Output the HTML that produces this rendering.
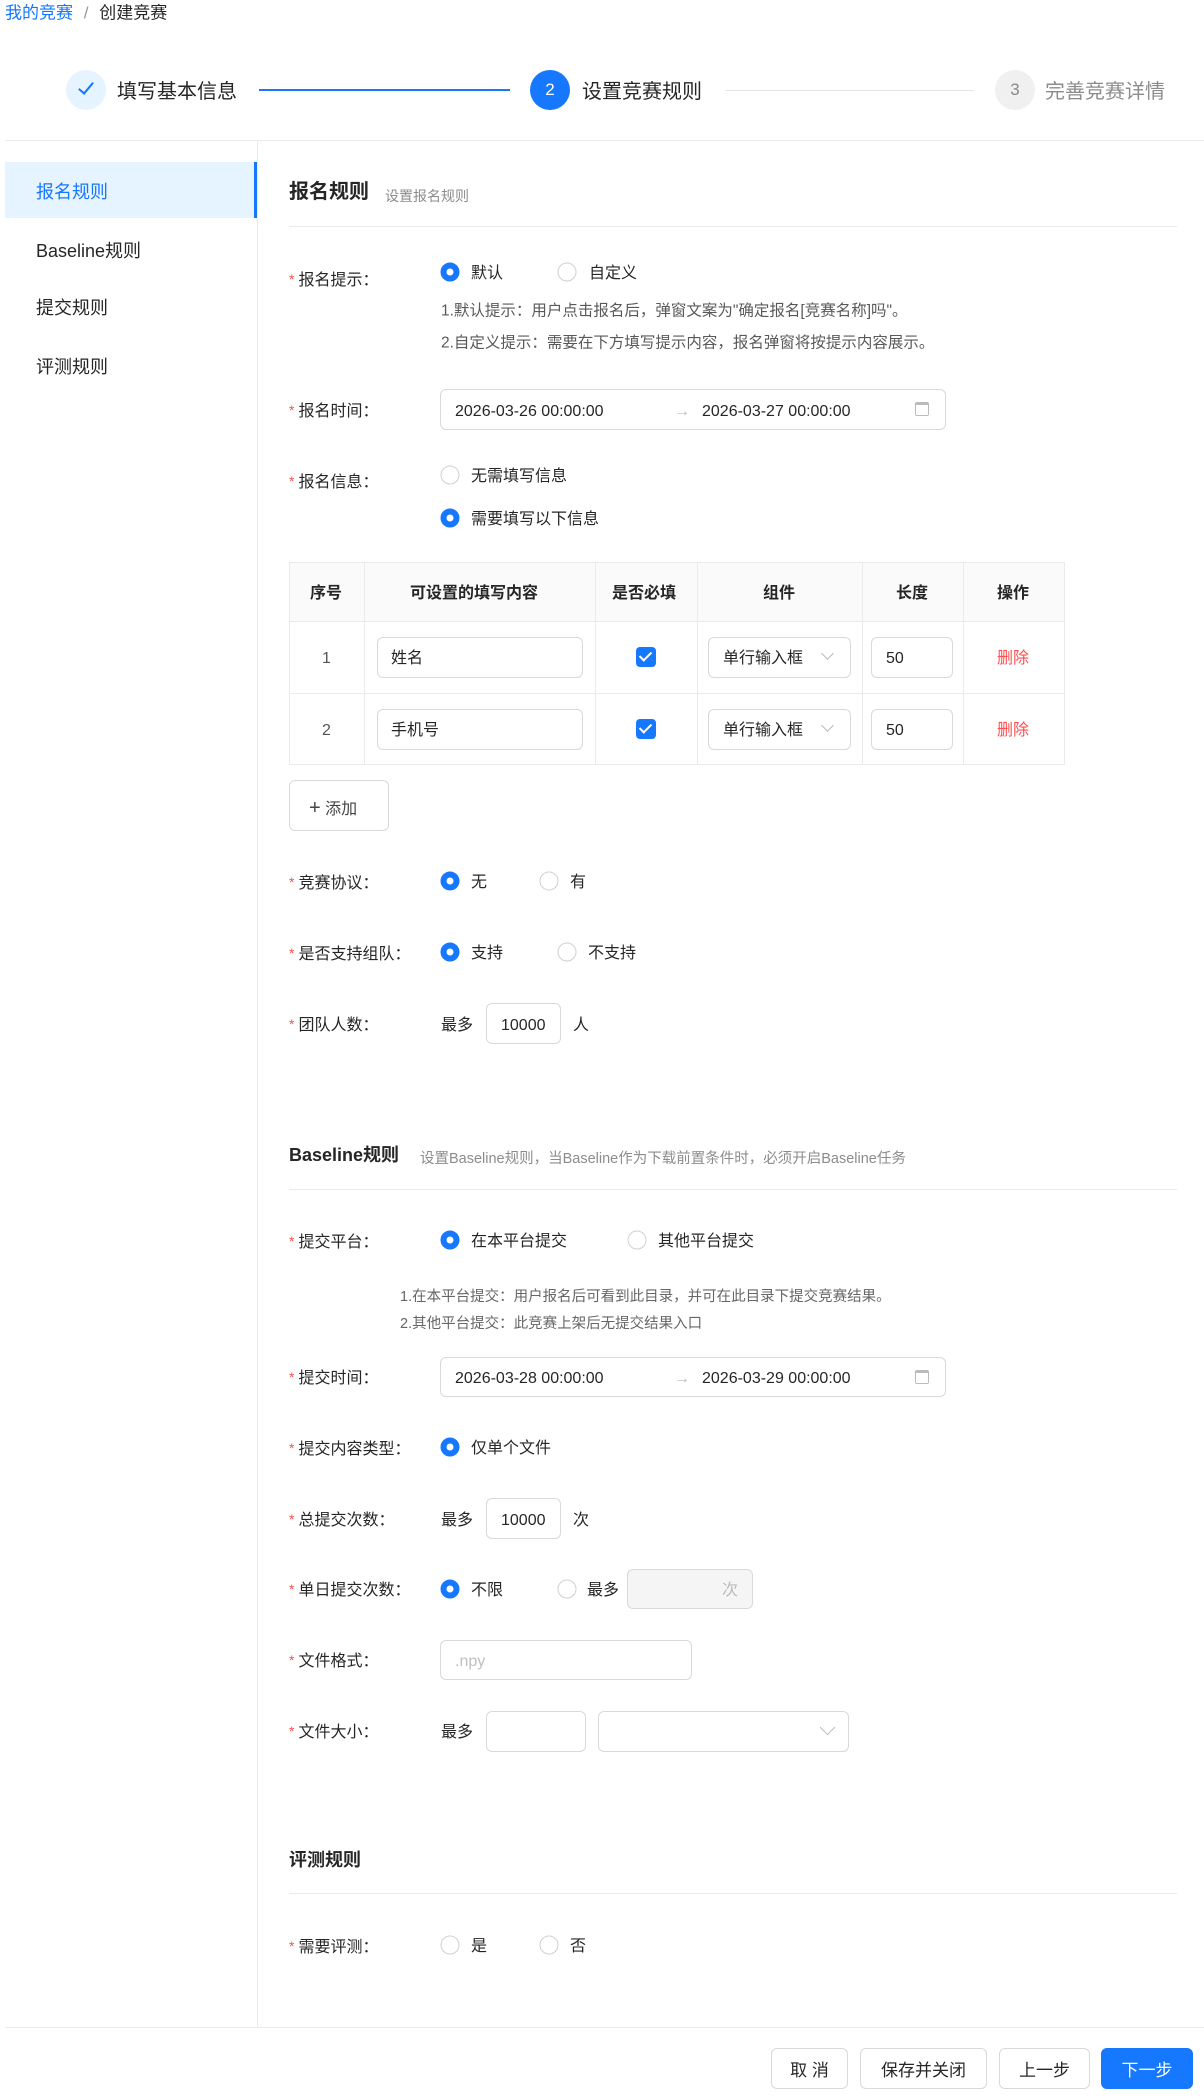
<!DOCTYPE html>
<html><head><meta charset="utf-8"><style>
*{box-sizing:border-box;margin:0;padding:0}
body{width:1204px;height:2099px;position:relative;background:#fff;font-family:"Liberation Sans","Noto Sans CJK SC",sans-serif;color:#262626;font-size:16px;overflow:hidden}
.a{position:absolute;white-space:nowrap}
.c{position:absolute;white-space:nowrap;transform:translateY(calc(-50% + 2px));line-height:1}
.lab:before{content:"*";color:#ff4d4f;margin-right:4px;font-size:14px;position:relative;top:-1px}
.lab{left:289px}
.r{position:absolute;width:19px;height:19px;border-radius:50%;border:1px solid #d0d0d0;background:#fff;transform:translate(-50%,-50%)}
.r.on{border:6px solid #1677ff}
.box{position:absolute;border:1px solid #d9d9d9;border-radius:6px;background:#fff}
.hr{position:absolute;height:1px;background:#ebebeb}
.note{color:#595959;font-size:15.5px}
.btn{position:absolute;top:2048px;height:41px;border:1px solid #d9d9d9;border-radius:6px;display:flex;align-items:center;justify-content:center;font-size:17px;background:#fff}
.cb{position:absolute;width:20px;height:20px;border-radius:4px;background:#1677ff;transform:translate(-50%,-50%)}
.cb:after{content:"";position:absolute;left:6px;top:2px;width:5px;height:10px;border:solid #fff;border-width:0 2px 2px 0;transform:rotate(45deg)}
.chev{position:absolute;width:9px;height:9px;border:solid #bbb;border-width:0 1.5px 1.5px 0;transform:rotate(45deg)}
.th{font-weight:600}
</style></head><body>

<div class="c" style="left:5px;top:11px;font-size:17px"><span style="color:#1677ff">我的竞赛</span> <span style="color:#999;margin:0 6px">/</span> 创建竞赛</div>

<div class="a" style="left:66px;top:70px;width:40px;height:40px;border-radius:50%;background:#e6f4ff"></div>
<div class="a" style="left:82px;top:79px;width:8px;height:15px;border:solid #1677ff;border-width:0 2px 2px 0;transform:rotate(40deg)"></div>
<div class="c" style="left:117px;top:90px;font-size:20px">填写基本信息</div>
<div class="a" style="left:259px;top:89px;width:251px;height:2px;background:#1677ff"></div>
<div class="a" style="left:530px;top:70px;width:40px;height:40px;border-radius:50%;background:#1677ff;color:#fff;text-align:center;line-height:40px;font-size:17px">2</div>
<div class="c" style="left:582px;top:90px;font-size:20px">设置竞赛规则</div>
<div class="a" style="left:725px;top:90px;width:249px;height:1px;background:#e6e6e6"></div>
<div class="a" style="left:995px;top:70px;width:40px;height:40px;border-radius:50%;background:#f0f0f0;color:#888;text-align:center;line-height:40px;font-size:17px">3</div>
<div class="c" style="left:1045px;top:90px;font-size:20px;color:#8c8c8c">完善竞赛详情</div>

<div class="hr" style="left:5px;top:140px;width:1199px"></div>
<div class="a" style="left:257px;top:140px;width:1px;height:1887px;background:#ebebeb"></div>

<div class="a" style="left:5px;top:162px;width:252px;height:56px;background:#e6f4ff;border-right:3px solid #1677ff"></div>
<div class="c" style="left:36px;top:190px;font-size:18px;color:#1677ff">报名规则</div>
<div class="c" style="left:36px;top:249px;font-size:18px">Baseline规则</div>
<div class="c" style="left:36px;top:306px;font-size:18px">提交规则</div>
<div class="c" style="left:36px;top:365px;font-size:18px">评测规则</div>

<div class="c" style="left:289px;top:190px;font-size:20px;font-weight:bold">报名规则</div>
<div class="c" style="left:385px;top:194px;font-size:14px;color:#8c8c8c">设置报名规则</div>
<div class="hr" style="left:289px;top:226px;width:888px"></div>

<div class="c lab" style="top:279px">报名提示：</div>
<div class="r on" style="left:450px;top:272px"></div><div class="c" style="left:471px;top:272px">默认</div>
<div class="r" style="left:567px;top:272px"></div><div class="c" style="left:589px;top:272px">自定义</div>
<div class="c note" style="left:441px;top:309px">1.默认提示：用户点击报名后，弹窗文案为"确定报名[竞赛名称]吗"。</div>
<div class="c note" style="left:441px;top:341px">2.自定义提示：需要在下方填写提示内容，报名弹窗将按提示内容展示。</div>

<div class="c lab" style="top:410px">报名时间：</div>
<div class="box" style="left:440px;top:389px;width:506px;height:41px"></div>
<div class="c" style="left:455px;top:410px">2026-03-26 00:00:00</div>
<div class="c" style="left:674px;top:410px;color:#bbb">→</div>
<div class="c" style="left:702px;top:410px">2026-03-27 00:00:00</div>
<div class="a" style="left:915px;top:402px;width:14px;height:14px;border:1.5px solid #bbb;border-radius:2px;border-top-width:3px"></div>

<div class="c lab" style="top:481px">报名信息：</div>
<div class="r" style="left:450px;top:475px"></div><div class="c" style="left:471px;top:475px">无需填写信息</div>
<div class="r on" style="left:450px;top:518px"></div><div class="c" style="left:471px;top:518px">需要填写以下信息</div>

<div class="a" style="left:289px;top:562px;width:776px;height:203px;border:1px solid #ebebeb"></div>
<div class="a" style="left:290px;top:563px;width:774px;height:58px;background:#fafafa"></div>
<div class="hr" style="left:289px;top:621px;width:776px"></div>
<div class="hr" style="left:289px;top:693px;width:776px"></div>
<div class="a" style="left:364px;top:562px;width:1px;height:203px;background:#ebebeb"></div>
<div class="a" style="left:595px;top:562px;width:1px;height:203px;background:#ebebeb"></div>
<div class="a" style="left:697px;top:562px;width:1px;height:203px;background:#ebebeb"></div>
<div class="a" style="left:862px;top:562px;width:1px;height:203px;background:#ebebeb"></div>
<div class="a" style="left:963px;top:562px;width:1px;height:203px;background:#ebebeb"></div>
<div class="c th" style="left:310px;top:592px">序号</div>
<div class="c th" style="left:410px;top:592px">可设置的填写内容</div>
<div class="c th" style="left:612px;top:592px">是否必填</div>
<div class="c th" style="left:763px;top:592px">组件</div>
<div class="c th" style="left:896px;top:592px">长度</div>
<div class="c th" style="left:997px;top:592px">操作</div>

<div class="c" style="left:322px;top:657px;color:#555">1</div>
<div class="box" style="left:377px;top:637px;width:206px;height:41px"></div><div class="c" style="left:391px;top:657px">姓名</div>
<div class="cb" style="left:646px;top:657px"></div>
<div class="box" style="left:708px;top:637px;width:143px;height:41px"></div><div class="c" style="left:723px;top:657px">单行输入框</div><div class="chev" style="left:823px;top:649px"></div>
<div class="box" style="left:871px;top:637px;width:82px;height:41px"></div><div class="c" style="left:886px;top:657px">50</div>
<div class="c" style="left:997px;top:657px;color:#ff4d4f">删除</div>

<div class="c" style="left:322px;top:729px;color:#555">2</div>
<div class="box" style="left:377px;top:709px;width:206px;height:41px"></div><div class="c" style="left:391px;top:729px">手机号</div>
<div class="cb" style="left:646px;top:729px"></div>
<div class="box" style="left:708px;top:709px;width:143px;height:41px"></div><div class="c" style="left:723px;top:729px">单行输入框</div><div class="chev" style="left:823px;top:721px"></div>
<div class="box" style="left:871px;top:709px;width:82px;height:41px"></div><div class="c" style="left:886px;top:729px">50</div>
<div class="c" style="left:997px;top:729px;color:#ff4d4f">删除</div>

<div class="box" style="left:289px;top:780px;width:100px;height:51px"></div>
<div class="c" style="left:309px;top:806px;color:#444"><span style="font-size:20px">+</span> 添加</div>

<div class="c lab" style="top:882px">竞赛协议：</div>
<div class="r on" style="left:450px;top:881px"></div><div class="c" style="left:471px;top:881px">无</div>
<div class="r" style="left:549px;top:881px"></div><div class="c" style="left:570px;top:881px">有</div>

<div class="c lab" style="top:953px">是否支持组队：</div>
<div class="r on" style="left:450px;top:952px"></div><div class="c" style="left:471px;top:952px">支持</div>
<div class="r" style="left:567px;top:952px"></div><div class="c" style="left:588px;top:952px">不支持</div>

<div class="c lab" style="top:1024px">团队人数：</div>
<div class="c" style="left:441px;top:1024px">最多</div>
<div class="box" style="left:486px;top:1003px;width:75px;height:41px"></div><div class="c" style="left:501px;top:1024px">10000</div>
<div class="c" style="left:573px;top:1024px">人</div>

<div class="c" style="left:289px;top:1153px;font-size:18px;font-weight:bold">Baseline规则</div>
<div class="c" style="left:420px;top:1157px;font-size:14.5px;color:#8c8c8c">设置Baseline规则，当Baseline作为下载前置条件时，必须开启Baseline任务</div>
<div class="hr" style="left:289px;top:1189px;width:888px"></div>

<div class="c lab" style="top:1241px">提交平台：</div>
<div class="r on" style="left:450px;top:1240px"></div><div class="c" style="left:471px;top:1240px">在本平台提交</div>
<div class="r" style="left:637px;top:1240px"></div><div class="c" style="left:658px;top:1240px">其他平台提交</div>
<div class="c" style="left:400px;top:1295px;font-size:14.5px;color:#666">1.在本平台提交：用户报名后可看到此目录，并可在此目录下提交竞赛结果。</div>
<div class="c" style="left:400px;top:1322px;font-size:14.5px;color:#666">2.其他平台提交：此竞赛上架后无提交结果入口</div>

<div class="c lab" style="top:1377px">提交时间：</div>
<div class="box" style="left:440px;top:1357px;width:506px;height:40px"></div>
<div class="c" style="left:455px;top:1377px">2026-03-28 00:00:00</div>
<div class="c" style="left:674px;top:1377px;color:#bbb">→</div>
<div class="c" style="left:702px;top:1377px">2026-03-29 00:00:00</div>
<div class="a" style="left:915px;top:1370px;width:14px;height:14px;border:1.5px solid #bbb;border-radius:2px;border-top-width:3px"></div>

<div class="c lab" style="top:1448px">提交内容类型：</div>
<div class="r on" style="left:450px;top:1447px"></div><div class="c" style="left:471px;top:1447px">仅单个文件</div>

<div class="c lab" style="top:1519px">总提交次数：</div>
<div class="c" style="left:441px;top:1519px">最多</div>
<div class="box" style="left:486px;top:1498px;width:75px;height:41px"></div><div class="c" style="left:501px;top:1519px">10000</div>
<div class="c" style="left:573px;top:1519px">次</div>

<div class="c lab" style="top:1589px">单日提交次数：</div>
<div class="r on" style="left:450px;top:1589px"></div><div class="c" style="left:471px;top:1589px">不限</div>
<div class="r" style="left:567px;top:1589px"></div><div class="c" style="left:587px;top:1589px">最多</div>
<div class="box" style="left:627px;top:1569px;width:126px;height:40px;background:#f5f5f5"></div>
<div class="c" style="left:722px;top:1589px;color:#bbb">次</div>

<div class="c lab" style="top:1660px">文件格式：</div>
<div class="box" style="left:440px;top:1640px;width:252px;height:40px"></div>
<div class="c" style="left:455px;top:1660px;color:#bfbfbf">.npy</div>

<div class="c lab" style="top:1731px">文件大小：</div>
<div class="c" style="left:441px;top:1731px">最多</div>
<div class="box" style="left:486px;top:1711px;width:100px;height:41px"></div>
<div class="box" style="left:598px;top:1711px;width:251px;height:41px"></div>
<div class="chev" style="left:822px;top:1722px;width:11px;height:11px"></div>

<div class="c" style="left:289px;top:1858px;font-size:18px;font-weight:bold">评测规则</div>
<div class="hr" style="left:289px;top:1893px;width:888px"></div>
<div class="c lab" style="top:1946px">需要评测：</div>
<div class="r" style="left:450px;top:1945px"></div><div class="c" style="left:471px;top:1945px">是</div>
<div class="r" style="left:549px;top:1945px"></div><div class="c" style="left:570px;top:1945px">否</div>

<div class="hr" style="left:5px;top:2027px;width:1199px"></div>
<div class="btn" style="left:771px;width:77px">取 消</div>
<div class="btn" style="left:860px;width:127px">保存并关闭</div>
<div class="btn" style="left:999px;width:91px">上一步</div>
<div class="btn" style="left:1101px;width:92px;background:#1677ff;border-color:#1677ff;color:#fff">下一步</div>
</body></html>
